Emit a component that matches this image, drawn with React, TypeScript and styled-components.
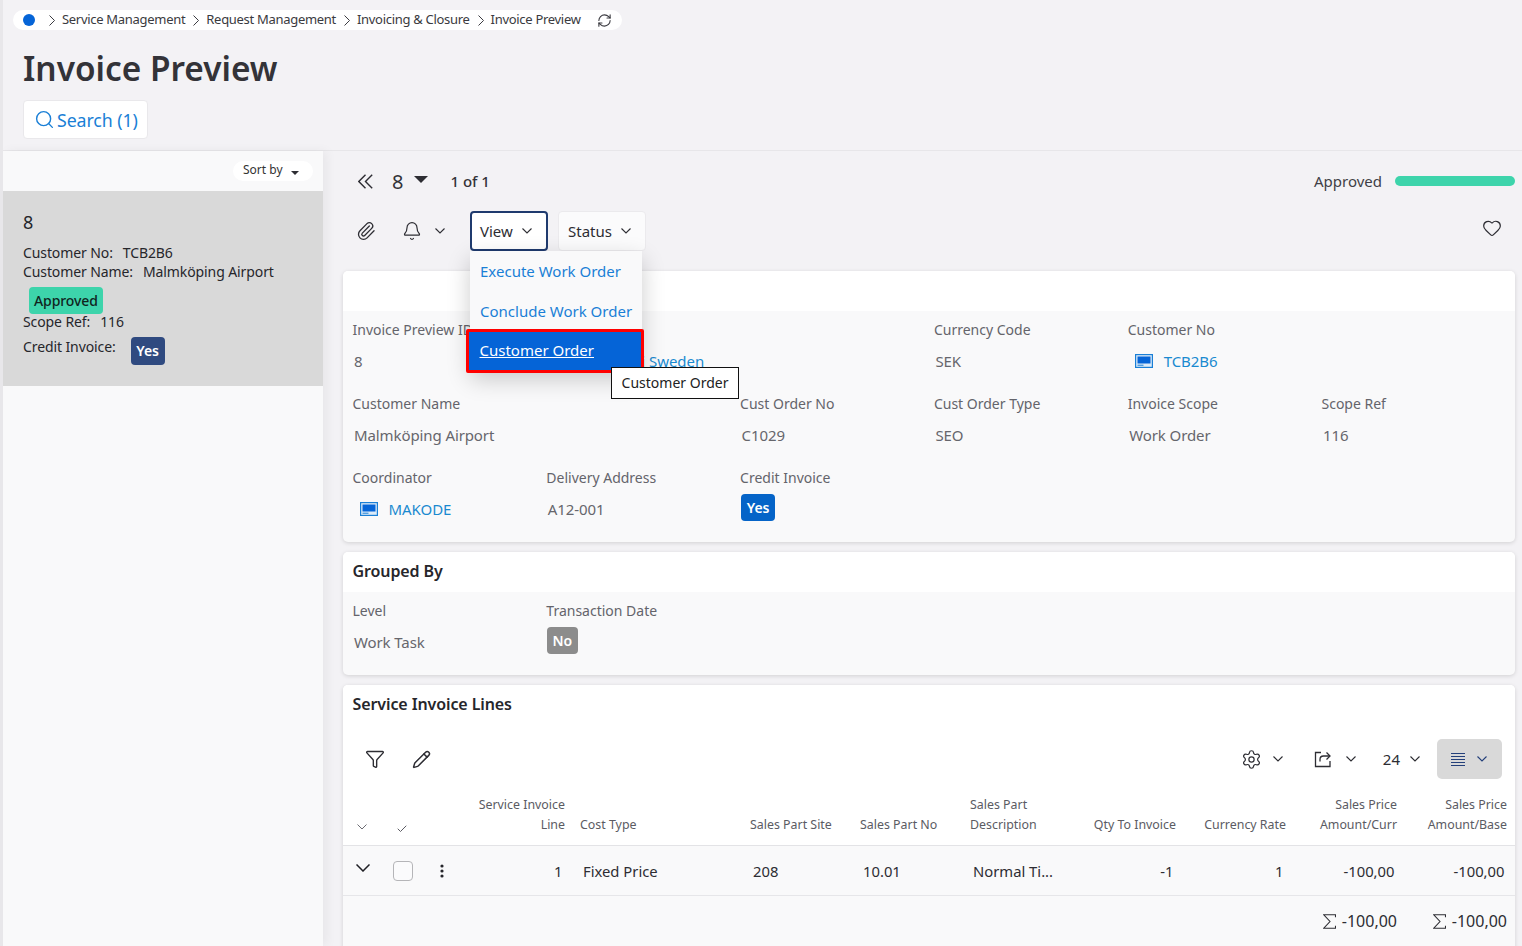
import React from 'react';
import styled, { createGlobalStyle } from 'styled-components';
import { Bell, Paperclip, Heart, Funnel, Pencil, Settings, Search, RefreshCw, Check } from 'lucide-react';

const GlobalStyle = createGlobalStyle`
  html, body { margin: 0; padding: 0; height: 946px; overflow: hidden; }
  body { font-family: "Noto Sans", "Open Sans", sans-serif; font-size: 14px; color: #2d2d33; background: #f3f2f5; }
  * { box-sizing: border-box; }
`;

const Page = styled.div`
  height: 946px;
  border-left: 3px solid #e8e7ea;
  display: flex;
  flex-direction: column;
  overflow: hidden;
`;

const TopArea = styled.header`
  height: 151px;
  flex: none;
  padding: 10px 0 0 10px;
  border-bottom: 1px solid #e7e6e9;
`;

const Breadcrumb = styled.nav`
  width: 609px;
  height: 20px;
  border-radius: 10px;
  background: #fff;
  display: flex;
  align-items: center;
  padding-left: 10px;
  font-size: 13px;
  letter-spacing: -0.3px;
  color: #3a3a40;
`;

const HomeDot = styled.span`
  width: 12px;
  height: 12px;
  border-radius: 50%;
  background: #0564d7;
  margin-right: 14px;
`;

const Crumb = styled.span`
  margin: 0 8px 2px 7px;
  white-space: nowrap;
`;

const RefreshSlot = styled.span`
  display: flex;
  margin-left: 8px;
`;

const Title = styled.h1`
  margin: 16px 0 10px 10px;
  font-size: 33.4px;
  line-height: 44px;
  font-weight: 600;
  color: #333338;
`;

const SearchButton = styled.button`
  margin-left: 10px;
  width: 125px;
  height: 39px;
  display: flex;
  align-items: center;
  gap: 2px;
  padding: 0 0 0 10px;
  background: #fff;
  border: 1px solid #e9e8eb;
  border-radius: 4px;
  font: inherit;
  font-size: 17.8px;
  letter-spacing: -0.1px;
  color: #1a7fd6;
`;

const Body = styled.div`
  flex: 1;
  display: flex;
  min-height: 0;
`;

const Sidebar = styled.aside`
  width: 320px;
  flex: none;
  background: #f9f9fa;
  box-shadow: 4px 0 10px rgba(0, 0, 0, 0.05);
`;

const SortRow = styled.div`
  height: 40px;
  display: flex;
  justify-content: flex-end;
  padding: 10px 10px 0 0;
`;

const SortPill = styled.div`
  width: 80px;
  height: 20px;
  border-radius: 10px;
  background: #fff;
  display: flex;
  align-items: center;
  padding: 0 0 3px 10px;
  gap: 8px;
  font-size: 12px;
  color: #333;
`;

const SmallCaret = styled.span`
  width: 0;
  height: 0;
  margin-top: 6px;
  border-left: 4.5px solid transparent;
  border-right: 4.5px solid transparent;
  border-top: 4px solid #2d2d33;
`;

const ListCard = styled.article`
  height: 195px;
  background: #d9d9d9;
  padding: 19px 20px 0;
  color: #26262b;
  line-height: 19px;
  letter-spacing: -0.1px;
`;

const ListNumber = styled.div`
  font-size: 18px;
  line-height: 25px;
  margin-bottom: 8px;
`;

const ListLine = styled.div`
  display: flex;
  gap: 10px;
`;

const ApprovedTag = styled.span`
  display: block;
  width: fit-content;
  margin: 6px 0 -2px 6px;
  height: 27px;
  line-height: 27px;
  padding: 0 5px;
  background: #3dd4ab;
  border-radius: 4px;
  font-weight: 500;
  color: #10241e;
`;

const CreditLine = styled(ListLine)`
  margin-top: 6px;
  gap: 15px;
  align-items: flex-start;
`;

const NavyTag = styled.span`
  width: 34px;
  height: 28px;
  line-height: 28px;
  text-align: center;
  background: #2f4a80;
  border-radius: 4px;
  color: #fff;
  font-weight: 600;
`;

const Main = styled.main`
  flex: 1;
  min-width: 0;
  padding: 0 7px 0 20px;
  display: flex;
  flex-direction: column;
`;

const RecordBar = styled.div`
  height: 60px;
  flex: none;
  display: flex;
  align-items: center;
  padding: 0 0 0 15px;
`;

const RecordNumber = styled.span`
  margin-left: 19px;
  font-size: 20px;
  color: #333338;
`;

const BigCaret = styled.span`
  width: 0;
  height: 0;
  margin: 0 0 4px 11px;
  border-left: 7.5px solid transparent;
  border-right: 7.5px solid transparent;
  border-top: 7px solid #2d2d33;
`;

const RecordCount = styled.span`
  margin-left: 22px;
  font-size: 15px;
  font-weight: 500;
  color: #333338;
`;

const StateLabel = styled.span`
  margin-left: auto;
  font-size: 15px;
  color: #3f3f46;
`;

const StateBar = styled.span`
  width: 120px;
  height: 10px;
  margin-left: 13px;
  border-radius: 5px;
  background: #3dd4ab;
`;

const CommandBar = styled.div`
  height: 40px;
  flex: none;
  margin-bottom: 20px;
  display: flex;
  align-items: center;
  padding-left: 13px;
`;

const BellGroup = styled.span`
  display: flex;
  align-items: center;
  gap: 13px;
  margin: 0 25px 0 26px;
`;

const MenuAnchor = styled.div`
  position: relative;
  margin-right: 10px;
`;

const CommandButton = styled.button<{ $open?: boolean; $width: number }>`
  width: ${p => p.$width}px;
  height: 40px;
  display: flex;
  align-items: center;
  gap: 9px;
  padding: 0 0 0 ${p => (p.$open ? 8 : 9)}px;
  background: ${p => (p.$open ? '#fff' : '#fbfbfc')};
  border: ${p => (p.$open ? '2px solid #1f3a6e' : '1px solid #ebeaed')};
  border-radius: 4px;
  font: inherit;
  font-size: 15px;
  color: #2d2d33;
`;

const Dropdown = styled.div`
  position: absolute;
  top: 40px;
  left: 0;
  width: 172px;
  height: 120px;
  background: #f9f9fa;
  box-shadow: 0 8px 22px rgba(0, 0, 0, 0.2);
  z-index: 5;
`;

const DropdownItem = styled.div`
  height: 40px;
  line-height: 40px;
  padding-left: 10px;
  font-size: 15px;
  color: #1a7fd6;
  white-space: nowrap;
`;

const ActiveItem = styled.div`
  height: 44px;
  line-height: 36px;
  margin: -2px -2px 0 -4px;
  padding-left: 10.5px;
  font-size: 15px;
  color: #fff;
  text-decoration: underline;
  background: #0564d7;
  border: 3.5px solid #f00;
  border-radius: 2px;
`;

const Tooltip = styled.div`
  position: absolute;
  top: 116px;
  left: 141px;
  width: 128px;
  height: 32px;
  line-height: 30px;
  text-align: center;
  font-size: 14px;
  background: #fff;
  color: #222;
  border: 1px solid #111;
  z-index: 6;
`;

const HeartSlot = styled.span`
  margin: -7px 13px 0 auto;
  display: flex;
`;

const Card = styled.section<{ $grow?: boolean }>`
  flex: ${p => (p.$grow ? '1 0 280px' : 'none')};
  margin-bottom: ${p => (p.$grow ? 0 : 10)}px;
  background: #f9f9fa;
  border-radius: 5px;
  box-shadow: 0 1px 4px rgba(0, 0, 0, 0.14);
  overflow: hidden;
`;

const CardHeader = styled.h2`
  height: 40px;
  margin: 0;
  padding: 0 9.5px;
  background: #fff;
  font-size: 16px;
  line-height: 38px;
  font-weight: 600;
  letter-spacing: -0.1px;
  color: #26262b;
`;

const FieldGrid = styled.div`
  display: grid;
  grid-template-columns: repeat(6, 193.8px);
  padding: 9px 0 0 9.5px;
`;

const Field = styled.div<{ $span?: number }>`
  height: 74px;
  grid-column: auto / span ${p => p.$span ?? 1};
`;

const Label = styled.div`
  height: 20px;
  line-height: 20px;
  margin-bottom: 11px;
  color: #64646b;
  white-space: nowrap;
`;

const Value = styled.div`
  height: 20px;
  line-height: 20px;
  padding-left: 1.5px;
  font-size: 15px;
  letter-spacing: -0.1px;
  color: #66666c;
  white-space: nowrap;
`;

const LinkValue = styled.a<{ $pad?: number }>`
  display: flex;
  align-items: center;
  gap: 11px;
  height: 20px;
  padding-left: ${p => p.$pad ?? 7}px;
  font-size: 15px;
  letter-spacing: -0.05px;
  color: #1a8ad0;
  white-space: nowrap;
`;

const ToggleBadge = styled.span<{ $on: boolean }>`
  display: block;
  width: ${p => (p.$on ? 34 : 31)}px;
  height: 27px;
  line-height: 27px;
  margin: -5px 0 0 ${p => (p.$on ? 1 : 0.5)}px;
  text-align: center;
  border-radius: 4px;
  background: ${p => (p.$on ? '#0564c8' : '#8c8c8c')};
  color: #fff;
  font-weight: 600;
`;

const LinesTop = styled.div`
  background: #fff;
`;

const TableToolbar = styled.div`
  height: 54px;
  padding: 14px 13px 0 22px;
  display: flex;
  align-items: center;
`;

const ToolIcons = styled.div`
  display: flex;
  align-items: center;
  gap: 27px;
  margin-right: auto;
`;

const ToolMenu = styled.span<{ $gap: number; $right: number }>`
  display: flex;
  align-items: center;
  gap: ${p => p.$gap}px;
  margin-right: ${p => p.$right}px;
`;

const PageSize = styled.span`
  font-size: 15px;
  color: #2d2d33;
`;

const ListToggle = styled.span`
  width: 65px;
  height: 40px;
  display: flex;
  align-items: center;
  gap: 12px;
  padding-left: 14px;
  border-radius: 5px;
  background: #d9d9d9;
`;

const columns = '40px 40px 40px 109px 170px 110px 110px 111px 110px 110px 111px 110px';

const HeadRow = styled.div`
  display: grid;
  grid-template-columns: ${columns};
  height: 67px;
  padding: 15px 0 10px;
  border-bottom: 1px solid #e3e3e6;
  font-size: 12.4px;
  line-height: 20px;
  color: #5b5b63;
`;

const HeadCell = styled.div<{ $right?: boolean }>`
  align-self: end;
  padding: ${p => (p.$right ? '0 7px 0 0' : '0 0 0 8px')};
  text-align: ${p => (p.$right ? 'right' : 'left')};
  white-space: pre-line;
`;

const HeadIcon = styled.div<{ $x: number; $y: number }>`
  align-self: end;
  display: flex;
  padding: 0 0 ${p => p.$y}px ${p => p.$x}px;
`;

const DataRow = styled.div`
  display: grid;
  grid-template-columns: ${columns};
  height: 50px;
  align-items: center;
  border-bottom: 1px solid #e6e6e9;
  font-size: 14.8px;
  color: #2d2d33;
`;

const DataCell = styled.div<{ $right?: boolean }>`
  padding: ${p => (p.$right ? '0 9.5px 0 0' : '0 0 0 11px')};
  text-align: ${p => (p.$right ? 'right' : 'left')};
  white-space: nowrap;
`;

const RowIcon = styled.div<{ $x: number; $up?: number }>`
  display: flex;
  padding-left: ${p => p.$x}px;
  margin-top: ${p => -(p.$up ?? 0)}px;
`;

const RowCheck = styled.span`
  width: 20px;
  height: 20px;
  border: 1px solid #b5b5b8;
  border-radius: 4px;
  background: #fbfbfc;
`;

const SumRow = styled.div`
  display: grid;
  grid-template-columns: ${columns};
  height: 50px;
  align-items: center;
  font-size: 16px;
  color: #2d2d33;
`;

const SumCell = styled.div<{ $col: number }>`
  grid-column: ${p => p.$col};
  padding-right: 7px;
  display: flex;
  align-items: center;
  justify-content: flex-end;
  gap: 6px;
  white-space: nowrap;
`;

const MonitorIcon = () => (
  <svg width="18" height="14" viewBox="0 0 18 14" fill="none">
    <rect x="0.6" y="0.6" width="16.8" height="12.8" stroke="#1a7fd6" strokeWidth="1.2" fill="#dcebf8" />
    <rect x="2.5" y="2.5" width="13" height="7" fill="#0564d7" />
    <rect x="2.5" y="10.7" width="6" height="1" fill="#1a7fd6" />
  </svg>
);

const ShareIcon = () => (
  <svg width="18" height="18" viewBox="0 0 18 18" fill="none" stroke="#2d2d33" strokeWidth="1.3">
    <path d="M7 2.5H1.5V16.5H16V11" />
    <path d="M6 11.5V9.5C6 7.5 7.5 6 9.5 6H16" />
    <path d="M12.5 2.5L16 6L12.5 9.5" />
  </svg>
);

const DenseListIcon = () => (
  <svg width="14" height="14" viewBox="0 0 14 14" stroke="#24407a" strokeWidth="1">
    <path d="M0 1.5H14M0 4.5H14M0 7.5H14M0 10.5H14M0 13.5H14" />
  </svg>
);

const SigmaIcon = () => (
  <svg width="13" height="15" viewBox="0 0 13 15" fill="none" stroke="#2d2d33" strokeWidth="1.1">
    <path d="M12.5 3.2V0.8H0.8L7 7.5L0.8 14.2H12.5V11.8" />
  </svg>
);

const DotsIcon = () => (
  <svg width="4" height="14" viewBox="0 0 4 14" fill="#26262b">
    <circle cx="2" cy="2" r="1.6" />
    <circle cx="2" cy="7" r="1.6" />
    <circle cx="2" cy="12" r="1.6" />
  </svg>
);

const DoubleChevronLeft = () => (
  <svg width="15" height="15" viewBox="0 0 15 15" fill="none" stroke="#2d2d33" strokeWidth="1.4">
    <path d="M7.5 0.8L0.8 7.5L7.5 14.2" />
    <path d="M14.2 0.8L7.5 7.5L14.2 14.2" />
  </svg>
);

const CrumbArrow = () => (
  <svg width="6" height="11" viewBox="0 0 6 11" fill="none" stroke="#3a3a40" strokeWidth="1">
    <path d="M0.5 0.5L5.5 5.5L0.5 10.5" />
  </svg>
);

const Chev = ({ width = 10, stroke = 1.1, color = '#2d2d33' }: { width?: number; stroke?: number; color?: string }) => (
  <svg width={width} height={width / 2 + 1} viewBox={`0 0 ${width} ${width / 2 + 1}`} fill="none" stroke={color} strokeWidth={stroke}>
    <path d={`M0.5 0.5L${width / 2} ${width / 2}L${width - 0.5} 0.5`} />
  </svg>
);

const crumbs = ['Service Management', 'Request Management', 'Invoicing & Closure', 'Invoice Preview'];

const App = () => {
  return (
    <React.Fragment>
      <GlobalStyle />
      <Page>
        <TopArea>
          <Breadcrumb>
            <HomeDot />
            {crumbs.map(c => (
              <React.Fragment key={c}>
                <CrumbArrow />
                <Crumb>{c}</Crumb>
              </React.Fragment>
            ))}
            <RefreshSlot>
              <RefreshCw size={15} strokeWidth={1.1} absoluteStrokeWidth color="#3a3a40" />
            </RefreshSlot>
          </Breadcrumb>
          <Title>Invoice Preview</Title>
          <SearchButton>
            <Search size={21} strokeWidth={1.4} absoluteStrokeWidth color="#1a7fd6" />
            Search (1)
          </SearchButton>
        </TopArea>
        <Body>
          <Sidebar>
            <SortRow>
              <SortPill>
                Sort by
                <SmallCaret />
              </SortPill>
            </SortRow>
            <ListCard>
              <ListNumber>8</ListNumber>
              <ListLine>
                <span>Customer No:</span>
                <span>TCB2B6</span>
              </ListLine>
              <ListLine>
                <span>Customer Name:</span>
                <span>Malmköping Airport</span>
              </ListLine>
              <ApprovedTag>Approved</ApprovedTag>
              <ListLine>
                <span>Scope Ref:</span>
                <span>116</span>
              </ListLine>
              <CreditLine>
                <span>Credit Invoice:</span>
                <NavyTag>Yes</NavyTag>
              </CreditLine>
            </ListCard>
          </Sidebar>
          <Main>
            <RecordBar>
              <DoubleChevronLeft />
              <RecordNumber>8</RecordNumber>
              <BigCaret />
              <RecordCount>1 of 1</RecordCount>
              <StateLabel>Approved</StateLabel>
              <StateBar />
            </RecordBar>
            <CommandBar>
              <Paperclip size={20} strokeWidth={1.3} absoluteStrokeWidth color="#2d2d33" />
              <BellGroup>
                <Bell size={20} strokeWidth={1.2} absoluteStrokeWidth color="#2d2d33" />
                <Chev />
              </BellGroup>
              <MenuAnchor>
                <CommandButton $open $width={78}>
                  View
                  <Chev />
                </CommandButton>
                <Dropdown>
                  <DropdownItem>Execute Work Order</DropdownItem>
                  <DropdownItem>Conclude Work Order</DropdownItem>
                  <ActiveItem>Customer Order</ActiveItem>
                  <Tooltip>Customer Order</Tooltip>
                </Dropdown>
              </MenuAnchor>
              <CommandButton $width={88}>
                Status
                <Chev />
              </CommandButton>
              <HeartSlot>
                <Heart size={20} strokeWidth={1.2} absoluteStrokeWidth color="#2d2d33" />
              </HeartSlot>
            </CommandBar>

            <Card>
              <CardHeader />
              <FieldGrid>
                <Field>
                  <Label>Invoice Preview ID</Label>
                  <Value>8</Value>
                </Field>
                <Field $span={2}>
                  <Label />
                  <LinkValue $pad={95}>i Sweden</LinkValue>
                </Field>
                <Field>
                  <Label>Currency Code</Label>
                  <Value>SEK</Value>
                </Field>
                <Field $span={2}>
                  <Label>Customer No</Label>
                  <LinkValue>
                    <MonitorIcon />
                    TCB2B6
                  </LinkValue>
                </Field>
                <Field $span={2}>
                  <Label>Customer Name</Label>
                  <Value>Malmköping Airport</Value>
                </Field>
                <Field>
                  <Label>Cust Order No</Label>
                  <Value>C1029</Value>
                </Field>
                <Field>
                  <Label>Cust Order Type</Label>
                  <Value>SEO</Value>
                </Field>
                <Field>
                  <Label>Invoice Scope</Label>
                  <Value>Work Order</Value>
                </Field>
                <Field>
                  <Label>Scope Ref</Label>
                  <Value>116</Value>
                </Field>
                <Field>
                  <Label>Coordinator</Label>
                  <LinkValue>
                    <MonitorIcon />
                    MAKODE
                  </LinkValue>
                </Field>
                <Field>
                  <Label>Delivery Address</Label>
                  <Value>A12-001</Value>
                </Field>
                <Field>
                  <Label>Credit Invoice</Label>
                  <ToggleBadge $on>Yes</ToggleBadge>
                </Field>
              </FieldGrid>
            </Card>

            <Card>
              <CardHeader>Grouped By</CardHeader>
              <FieldGrid>
                <Field>
                  <Label>Level</Label>
                  <Value>Work Task</Value>
                </Field>
                <Field>
                  <Label>Transaction Date</Label>
                  <ToggleBadge $on={false}>No</ToggleBadge>
                </Field>
              </FieldGrid>
            </Card>

            <Card $grow>
              <LinesTop>
                <CardHeader>Service Invoice Lines</CardHeader>
                <TableToolbar>
                  <ToolIcons>
                    <Funnel size={20} strokeWidth={1.4} absoluteStrokeWidth color="#2d2d33" />
                    <Pencil size={19} strokeWidth={1.5} absoluteStrokeWidth color="#2d2d33" />
                  </ToolIcons>
                  <ToolMenu $gap={11} $right={31}>
                    <Settings size={21} strokeWidth={1.2} absoluteStrokeWidth color="#2d2d33" />
                    <Chev />
                  </ToolMenu>
                  <ToolMenu $gap={14} $right={27}>
                    <ShareIcon />
                    <Chev />
                  </ToolMenu>
                  <ToolMenu $gap={10} $right={17}>
                    <PageSize>24</PageSize>
                    <Chev />
                  </ToolMenu>
                  <ListToggle>
                    <DenseListIcon />
                    <Chev color="#24407a" />
                  </ListToggle>
                </TableToolbar>
                <HeadRow>
                  <HeadIcon $x={14} $y={5}>
                    <Chev width={10} stroke={0.9} color="#5b5b63" />
                  </HeadIcon>
                  <HeadIcon $x={13} $y={0}>
                    <Check size={12} strokeWidth={1} absoluteStrokeWidth color="#5b5b63" />
                  </HeadIcon>
                  <div />
                  <HeadCell $right>{'Service Invoice\nLine'}</HeadCell>
                  <HeadCell>Cost Type</HeadCell>
                  <HeadCell>Sales Part Site</HeadCell>
                  <HeadCell>Sales Part No</HeadCell>
                  <HeadCell>{'Sales Part\nDescription'}</HeadCell>
                  <HeadCell $right>Qty To Invoice</HeadCell>
                  <HeadCell $right>Currency Rate</HeadCell>
                  <HeadCell $right>{'Sales Price\nAmount/Curr'}</HeadCell>
                  <HeadCell $right>{'Sales Price\nAmount/Base'}</HeadCell>
                </HeadRow>
              </LinesTop>
              <DataRow>
                <RowIcon $x={13} $up={5}>
                  <Chev width={14} stroke={1.5} color="#1f1f24" />
                </RowIcon>
                <RowIcon $x={10}>
                  <RowCheck />
                </RowIcon>
                <RowIcon $x={17}>
                  <DotsIcon />
                </RowIcon>
                <DataCell $right>1</DataCell>
                <DataCell>Fixed Price</DataCell>
                <DataCell>208</DataCell>
                <DataCell>10.01</DataCell>
                <DataCell>Normal Ti...</DataCell>
                <DataCell $right>-1</DataCell>
                <DataCell $right>1</DataCell>
                <DataCell $right>-100,00</DataCell>
                <DataCell $right>-100,00</DataCell>
              </DataRow>
              <SumRow>
                <SumCell $col={11}>
                  <SigmaIcon />
                  -100,00
                </SumCell>
                <SumCell $col={12}>
                  <SigmaIcon />
                  -100,00
                </SumCell>
              </SumRow>
            </Card>
          </Main>
        </Body>
      </Page>
    </React.Fragment>
  );
};

export default App;
